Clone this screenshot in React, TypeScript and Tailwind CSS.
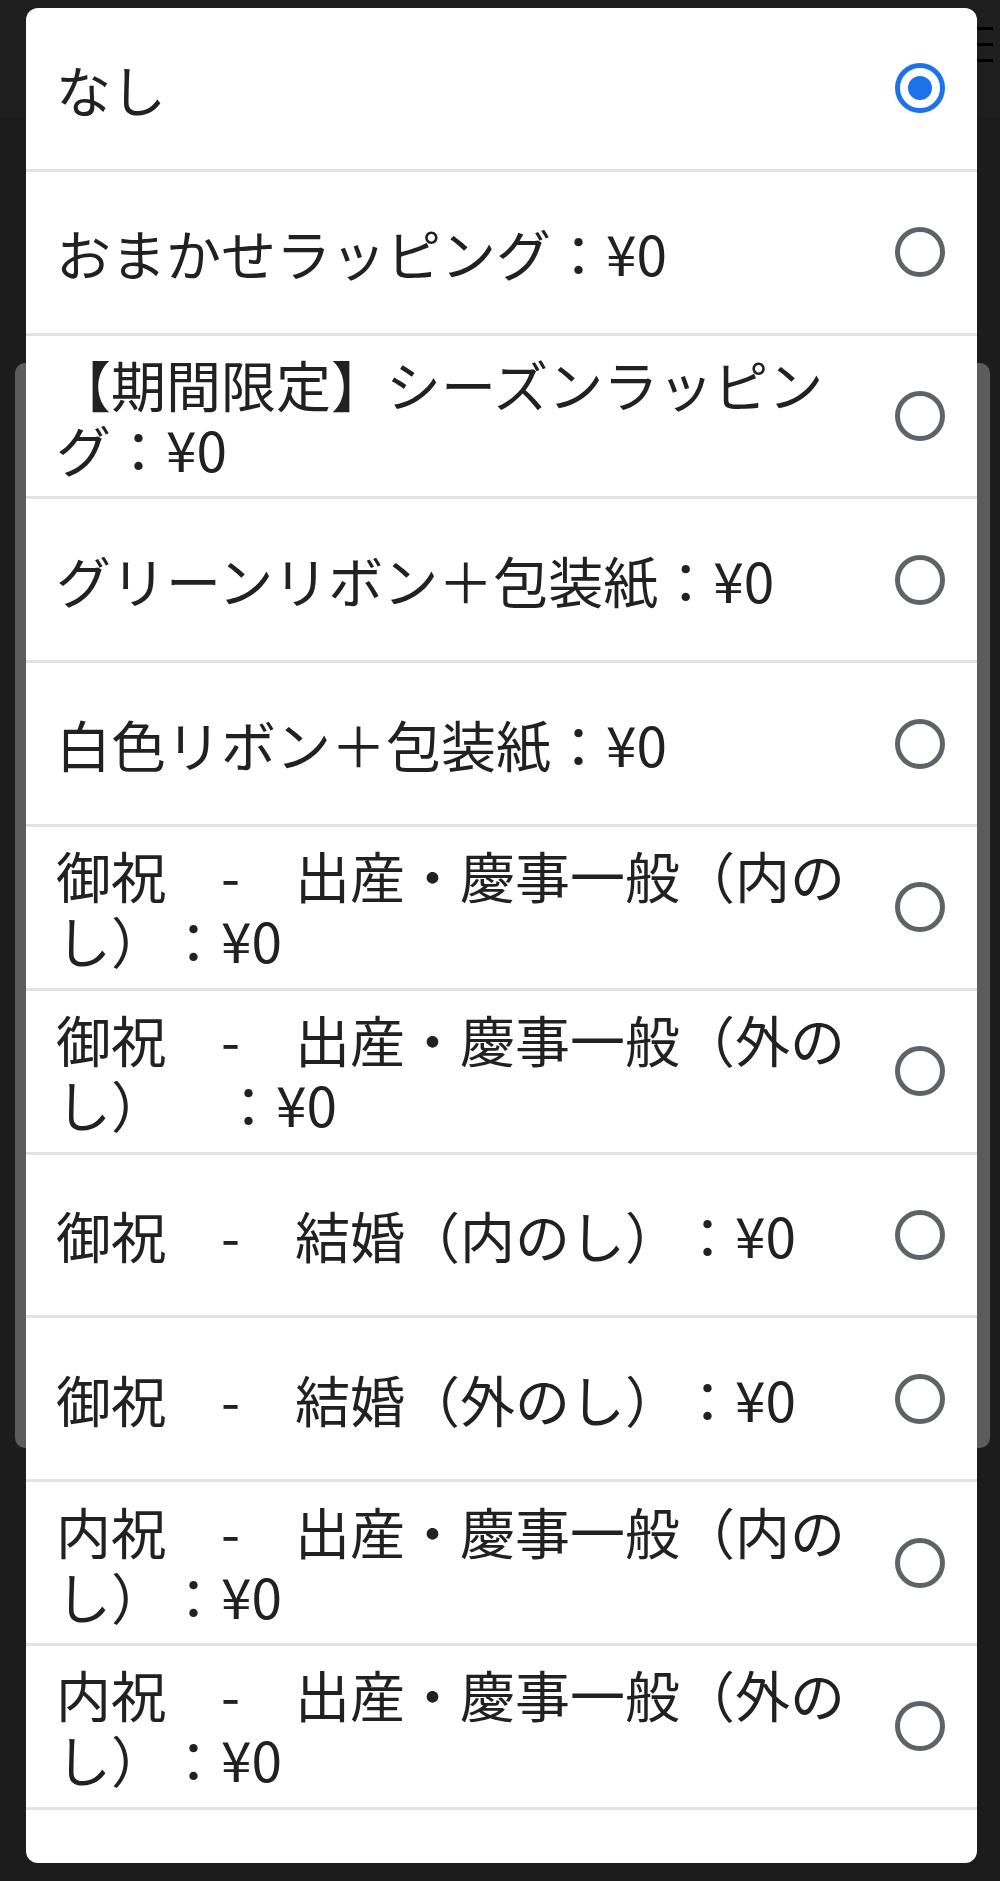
import React from 'react';

type Option = { label: string; checked?: boolean };

const OPTIONS: Option[] = [
  { label: 'なし', checked: true },
  { label: 'おまかせラッピング：¥0' },
  { label: '【期間限定】シーズンラッピング：¥0' },
  { label: 'グリーンリボン＋包装紙：¥0' },
  { label: '白色リボン＋包装紙：¥0' },
  { label: '御祝　-　出産・慶事一般（内のし）：¥0' },
  { label: '御祝　-　出産・慶事一般（外のし）　：¥0' },
  { label: '御祝　-　結婚（内のし）：¥0' },
  { label: '御祝　-　結婚（外のし）：¥0' },
  { label: '内祝　-　出産・慶事一般（内のし）：¥0' },
  { label: '内祝　-　出産・慶事一般（外のし）：¥0' },
];

function Radio({ checked }: { checked?: boolean }) {
  if (checked) {
    return (
      <span className="ml-[29px] flex h-[50px] w-[50px] shrink-0 items-center justify-center rounded-full border-[5px] border-[#1a73e8]">
        <span className="h-[24px] w-[24px] rounded-full bg-[#1a73e8]" />
      </span>
    );
  }
  return (
    <span className="ml-[29px] h-[50px] w-[50px] shrink-0 rounded-full border-[5px] border-[#5f6368]" />
  );
}

function Row({ option }: { option: Option }) {
  return (
    <div className="flex h-[163.8px] items-center border-b-[3px] border-[#e3e3e3] pl-[30px] pr-[32px]">
      <div className="flex-1 text-[55px] leading-[65px] text-[#212121] [text-spacing-trim:space-all]">
        {option.label}
      </div>
      <Radio checked={option.checked} />
    </div>
  );
}

export default function App() {
  return (
    <div
      className="relative h-[1881px] w-[1000px] overflow-hidden bg-[#1c1c1c]"
      style={{ fontFamily: '"Noto Sans CJK JP", "Noto Sans", sans-serif' }}
    >
      {/* 背後のページ（暗転中） */}
      <div className="flex h-[118px] justify-end bg-[#1e1e1e] pr-[7px] pt-[27px]">
        <div className="flex w-[16px] flex-col gap-[13px]">
          <span className="h-[3px] bg-black" />
          <span className="h-[3px] bg-black" />
          <span className="h-[3px] bg-black" />
        </div>
      </div>
      <div className="mx-[15px] mr-[10px] mt-[245px] h-[1085px] rounded-[10px] bg-[#5c5c5c]" />

      {/* 選択ダイアログ */}
      <div className="absolute left-[26px] top-[8px] h-[1855px] w-[951px] overflow-hidden rounded-[12px] bg-white">
        {OPTIONS.map((o) => (
          <Row key={o.label} option={o} />
        ))}
      </div>
    </div>
  );
}
